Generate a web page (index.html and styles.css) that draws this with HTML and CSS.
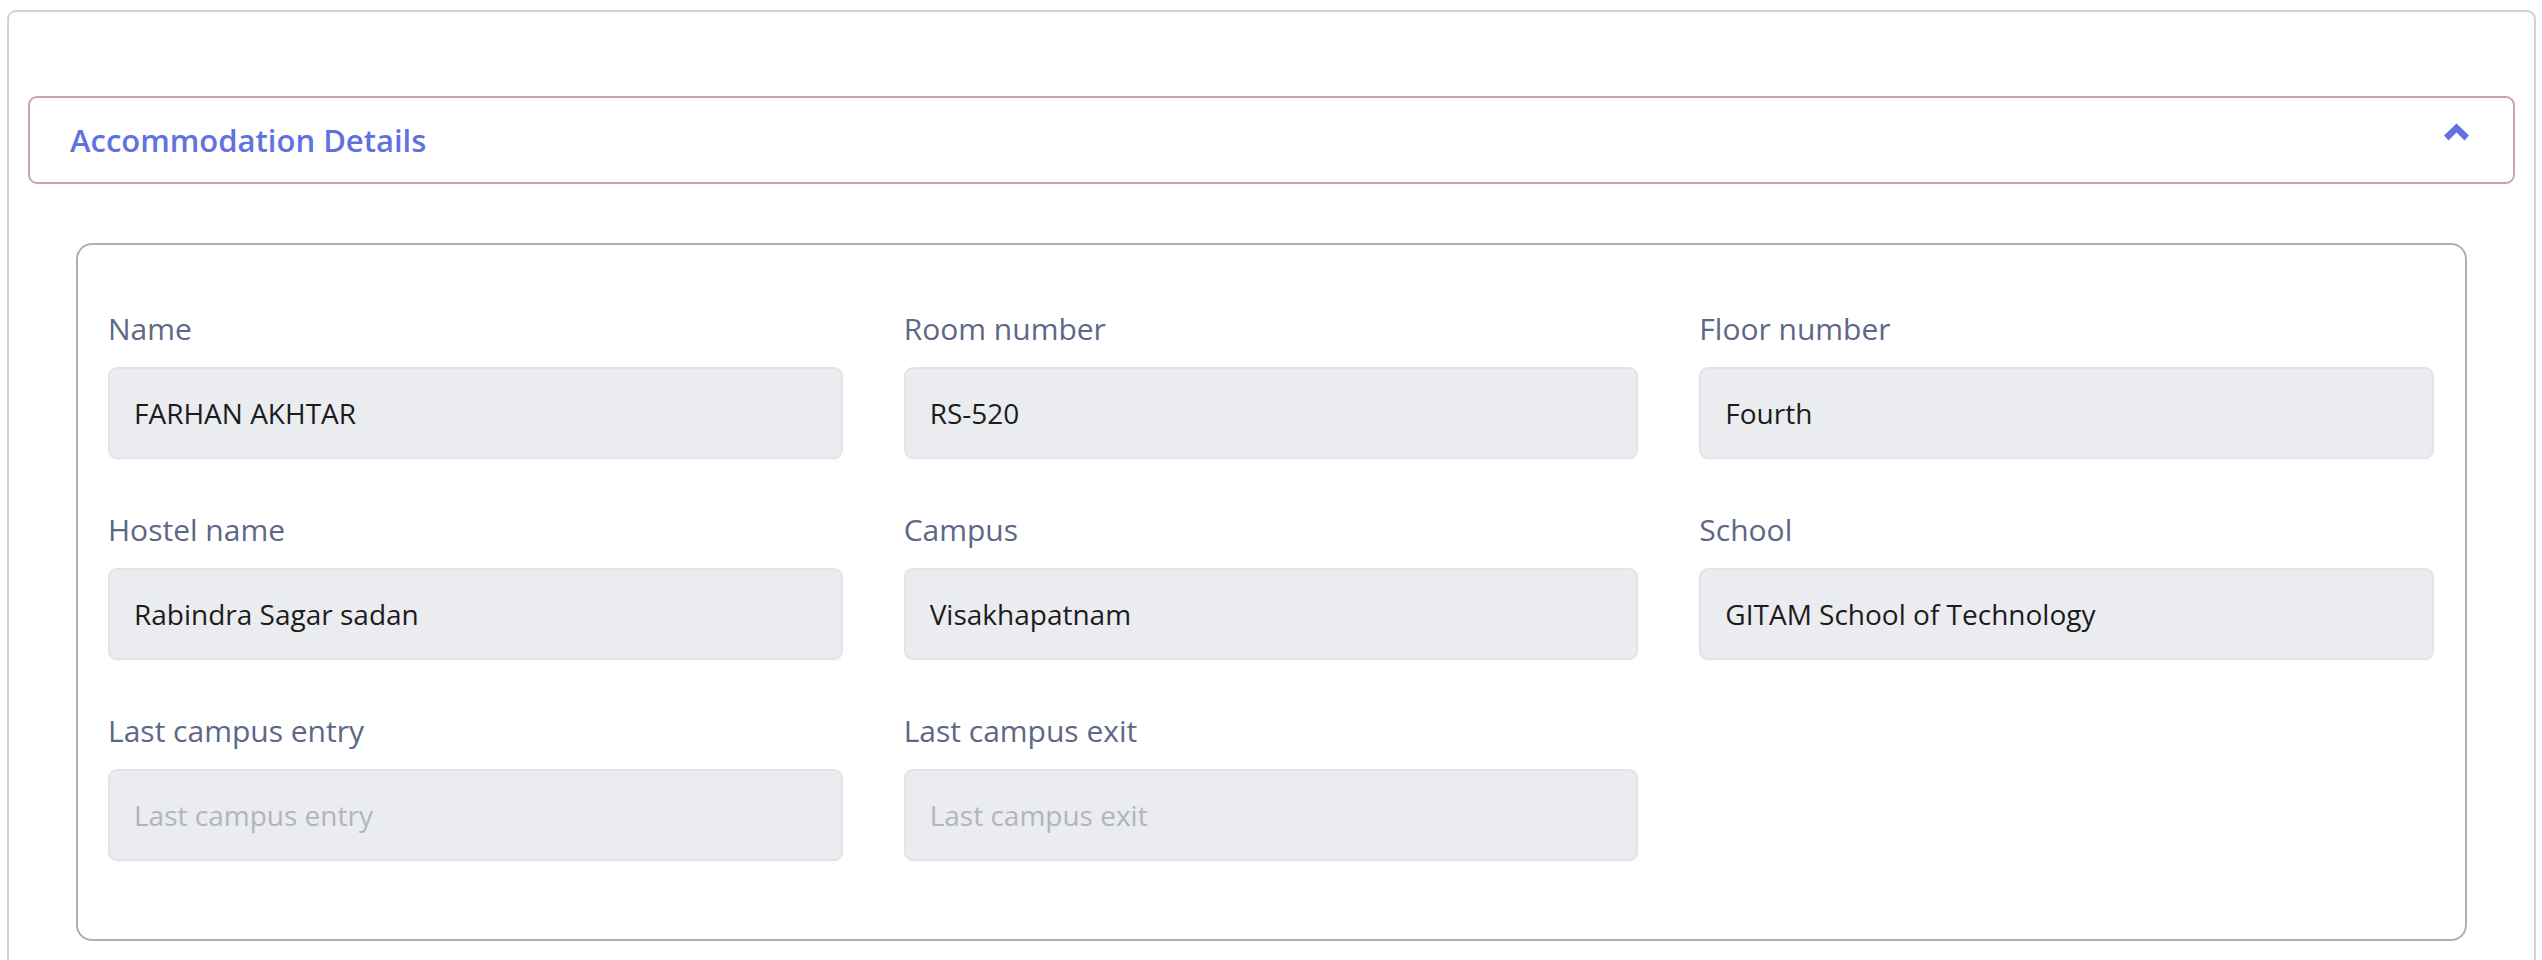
FILE: index.html
```html
<!DOCTYPE html>
<html lang="en">
<head>
<meta charset="utf-8">
<title>Accommodation Details</title>
<link rel="stylesheet" href="styles.css">
</head>
<body>
<div class="page-card">
  <div class="accordion-header">
    <span class="accordion-title">Accommodation Details</span>
    <svg class="chevron" viewBox="0 0 25 18" width="25" height="18" aria-hidden="true">
      <polygon fill="currentColor" points="12.5,0.5 25,12.5 20.5,17.5 12.5,9.5 4.5,17.5 0,12.5"/>
    </svg>
  </div>
  <div class="details-card">
    <div class="field">
      <label class="field-label">Name</label>
      <input class="field-input" type="text" value="FARHAN AKHTAR" readonly>
    </div>
    <div class="field">
      <label class="field-label">Room number</label>
      <input class="field-input" type="text" value="RS-520" readonly>
    </div>
    <div class="field">
      <label class="field-label">Floor number</label>
      <input class="field-input" type="text" value="Fourth" readonly>
    </div>
    <div class="field">
      <label class="field-label">Hostel name</label>
      <input class="field-input" type="text" value="Rabindra Sagar sadan" readonly>
    </div>
    <div class="field">
      <label class="field-label">Campus</label>
      <input class="field-input" type="text" value="Visakhapatnam" readonly>
    </div>
    <div class="field">
      <label class="field-label">School</label>
      <input class="field-input" type="text" value="GITAM School of Technology" readonly>
    </div>
    <div class="field">
      <label class="field-label">Last campus entry</label>
      <input class="field-input" type="text" placeholder="Last campus entry" readonly>
    </div>
    <div class="field">
      <label class="field-label">Last campus exit</label>
      <input class="field-input" type="text" placeholder="Last campus exit" readonly>
    </div>
  </div>
</div>
</body>
</html>
```
FILE: styles.css
```css
* {
  box-sizing: border-box;
}

html, body {
  margin: 0;
  padding: 0;
  background: #ffffff;
  font-family: "Open Sans", "Noto Sans", sans-serif;
}

body {
  padding: 10px 6px 0 7px;
  height: 960px;
  overflow: hidden;
}

.page-card {
  border: 2px solid #d2d2d2;
  border-radius: 9px;
  padding: 84px 19px 60px 19px;
  min-height: 1000px;
}

.accordion-header {
  display: flex;
  align-items: center;
  justify-content: space-between;
  height: 88px;
  border: 2px solid #c9a6a6;
  border-radius: 9px;
  padding: 0 44px 0 40px;
}

.accordion-title {
  font-size: 31px;
  font-weight: 600;
  color: #6072e0;
}

.chevron {
  display: block;
  color: #6072e0;
  margin-top: -16px;
}

.details-card {
  margin: 59px 48px 0 48px;
  border: 2px solid #b2aeaf;
  border-radius: 16px;
  padding: 61px 31px 78px 30px;
  display: grid;
  grid-template-columns: repeat(3, 1fr);
  column-gap: 61px;
  row-gap: 48px;
}

.field {
  display: flex;
  flex-direction: column;
  gap: 16px;
}

.field-label {
  font-size: 30px;
  line-height: 45px;
  color: #5d6786;
}

.field-input {
  height: 92px;
  width: 100%;
  border: 2px solid #e2e4e8;
  border-radius: 9px;
  background: #ebecf0;
  padding: 0 24px;
  font-family: "Open Sans", "Noto Sans", sans-serif;
  font-size: 28px;
  color: #1c1c1c;
  box-shadow: 0 1px 2px rgba(0, 0, 0, 0.04);
  outline: none;
}

.field-input::placeholder {
  color: #b1b5bc;
  opacity: 1;
}
```
